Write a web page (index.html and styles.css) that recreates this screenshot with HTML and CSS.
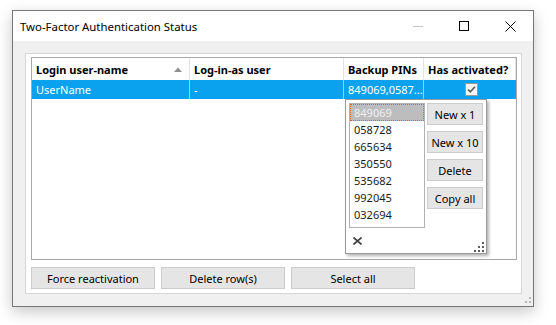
FILE: index.html
```html
<!DOCTYPE html>
<html lang="en">

<head>
    <meta charset="UTF-8">
    <meta name="viewport" content="width=device-width, initial-scale=1.0">
    <title>Two-Factor Authentication Status</title>
    <link rel="stylesheet" href="styles.css">
</head>

<body>
    <div class="window">
        <div class="titlebar">
            <span class="title">Two-Factor Authentication Status</span>
            <div class="caption-buttons">
                <div class="caption-btn">
                    <svg width="10" height="10" viewBox="0 0 10 10"><path d="M0 5.5h10" stroke="#c4c4c4" stroke-width="1" /></svg>
                </div>
                <div class="caption-btn">
                    <svg width="10" height="10" viewBox="0 0 10 10"><rect x="0.5" y="0.5" width="9" height="9" fill="none" stroke="#000" stroke-width="1" /></svg>
                </div>
                <div class="caption-btn">
                    <svg width="11" height="11" viewBox="0 0 11 11"><path d="M0.5 0.5l10 10M10.5 0.5l-10 10" stroke="#000" stroke-width="1" /></svg>
                </div>
            </div>
        </div>

        <div class="client">
            <div class="panel">
                <div class="listview">
                    <div class="lv-header">
                        <div class="lv-cell">
                            Login user-name
                            <svg class="sort-arrow" width="8" height="5" viewBox="0 0 8 5"><path d="M0 5L4 0.5L8 5z" fill="#909090" /></svg>
                        </div>
                        <div class="lv-cell">Log-in-as user</div>
                        <div class="lv-cell">Backup PINs</div>
                        <div class="lv-cell">Has activated?</div>
                    </div>
                    <div class="lv-row selected">
                        <div class="lv-cell">UserName</div>
                        <div class="lv-cell">-</div>
                        <div class="lv-cell">849069,0587...</div>
                        <div class="lv-cell center">
                            <svg width="13" height="13" viewBox="0 0 13 13">
                                <rect x="0.5" y="0.5" width="12" height="12" fill="#f4f4f4" stroke="#9a9a9a" />
                                <path d="M3 6.5l2.3 2.4L10 3.8" fill="none" stroke="#5a5a5a" stroke-width="1.6" />
                            </svg>
                        </div>
                    </div>
                </div>
                <div class="actions">
                    <button class="btn">Force reactivation</button>
                    <button class="btn">Delete row(s)</button>
                    <button class="btn">Select all</button>
                </div>
            </div>
        </div>

        <svg class="window-grip" width="10" height="7" viewBox="0 0 10 7">
            <rect x="8" y="0" width="2" height="2" fill="#b8b8b8" />
            <rect x="4" y="4" width="2" height="2" fill="#b8b8b8" />
            <rect x="8" y="4" width="2" height="2" fill="#b8b8b8" />
        </svg>

        <div class="pin-popup">
            <div class="popup-body">
                <div class="pin-list">
                    <div class="pin-item active">849069</div>
                    <div class="pin-item">058728</div>
                    <div class="pin-item">665634</div>
                    <div class="pin-item">350550</div>
                    <div class="pin-item">535682</div>
                    <div class="pin-item">992045</div>
                    <div class="pin-item">032694</div>
                </div>
                <div class="pin-buttons">
                    <button class="btn">New x 1</button>
                    <button class="btn">New x 10</button>
                    <button class="btn">Delete</button>
                    <button class="btn">Copy all</button>
                </div>
            </div>
            <div class="popup-footer">
                <svg class="popup-close" width="9" height="8" viewBox="0 0 9 8"><path d="M0.5 0.5l8 7M8.5 0.5l-8 7" stroke="#3c3c3c" stroke-width="1.6" /></svg>
                <svg class="popup-grip" width="11" height="11" viewBox="0 0 11 11">
                    <g fill="#5c5c5c">
                        <rect x="8" y="0" width="2" height="2" />
                        <rect x="4" y="4" width="2" height="2" />
                        <rect x="8" y="4" width="2" height="2" />
                        <rect x="0" y="8" width="2" height="2" />
                        <rect x="4" y="8" width="2" height="2" />
                        <rect x="8" y="8" width="2" height="2" />
                    </g>
                </svg>
            </div>
        </div>
    </div>
</body>

</html>
```

FILE: styles.css
```css
* {
    margin: 0;
    padding: 0;
    box-sizing: border-box;
    font-family: "Noto Sans", sans-serif;
}

body {
    background-color: white;
    width: 556px;
    height: 325px;
    overflow: hidden;
}

.window {
    position: relative;
    margin-left: 12px;
    margin-top: 10px;
    width: 522px;
    height: 297px;
    border: 1px solid #767676;
    background-color: #f0f0f0;
    box-shadow: 0 5px 14px rgba(0, 0, 0, 0.22);
    display: flex;
    flex-direction: column;
}

.titlebar {
    height: 30px;
    background-color: white;
    display: flex;
    align-items: center;
    justify-content: space-between;
}

.title {
    font-size: 11.4px;
    color: black;
    padding-left: 7px;
}

.caption-buttons {
    display: flex;
    height: 100%;
}

.caption-btn {
    width: 46px;
    height: 100%;
    display: flex;
    align-items: center;
    justify-content: center;
}

.client {
    flex: 1;
    padding: 12px 11px 12px 12px;
}

.panel {
    height: 100%;
    background-color: white;
    border: 1px solid #d6d6d6;
    padding: 3px 4px 4px 5px;
    display: flex;
    flex-direction: column;
    gap: 7px;
}

.listview {
    flex: 1;
    background-color: white;
    border: 1px solid #a8a8a8;
}

.lv-header,
.lv-row {
    display: grid;
    grid-template-columns: 158px 154px 80px 1fr;
}

.lv-header {
    height: 22px;
}

.lv-row {
    height: 19px;
}

.lv-cell {
    display: flex;
    align-items: center;
    padding-left: 4px;
    font-size: 11px;
    color: black;
    white-space: nowrap;
    overflow: hidden;
}

.lv-header .lv-cell {
    font-weight: bold;
    border-right: 1px solid #e3e3e3;
    position: relative;
}

.sort-arrow {
    position: absolute;
    right: 7px;
    top: 9px;
}

.lv-row.selected {
    background-color: #0aa2ee;
}

.lv-row.selected .lv-cell {
    color: white;
    border-right: 1px solid #8fd2f6;
}

.lv-row .lv-cell.center {
    justify-content: center;
    padding-left: 2px;
    border-right: none;
}

.actions {
    display: flex;
    gap: 6px;
}

.btn {
    height: 22px;
    background-color: #e5e5e5;
    border: 1px solid #cccccc;
    font-size: 11px;
    color: black;
}

.actions .btn {
    width: 124px;
}

.window-grip {
    position: absolute;
    right: 2px;
    bottom: 2px;
}

.pin-popup {
    position: absolute;
    left: 332px;
    top: 88px;
    width: 142px;
    height: 155px;
    background-color: white;
    border: 1px solid #9a9a9a;
    box-shadow: 2px 2px 3px rgba(0, 0, 0, 0.3);
    display: flex;
    flex-direction: column;
}

.popup-body {
    display: flex;
    gap: 2px;
    padding: 3px 3px 0 3px;
}

.pin-list {
    width: 76px;
    height: 125px;
    border: 1px solid #b0b0b0;
    display: flex;
    flex-direction: column;
}

.pin-item {
    height: 17px;
    line-height: 15px;
    padding-left: 3px;
    font-size: 11px;
    color: #1c1c1c;
    border: 1px solid transparent;
}

.pin-item.active {
    background-color: #bdbdbd;
    color: #efefef;
    border: 1px dotted #e2631f;
}

.pin-buttons {
    display: flex;
    flex-direction: column;
    gap: 6px;
}

.pin-buttons .btn {
    width: 56px;
}

.popup-footer {
    flex: 1;
    display: flex;
    justify-content: space-between;
    align-items: center;
    padding-left: 7px;
}

.popup-grip {
    align-self: flex-end;
    margin-right: 1px;
}
```
